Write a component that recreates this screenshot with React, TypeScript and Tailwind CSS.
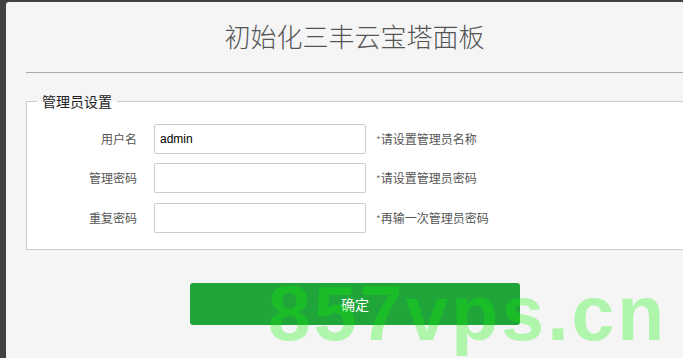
import React from "react";

const cjk = '"Noto Sans CJK SC", "Liberation Sans", sans-serif';

function Row({ label, value, hint, className = "" }: { label: string; value?: string; hint: string; className?: string }) {
  return (
    <div className={"flex items-center h-[30px] " + className}>
      <div className="w-[110px] text-right text-[12px] text-[#555] mr-[17px]" style={{ fontFamily: cjk }}>
        {label}
      </div>
      <div
        className="w-[212px] h-[30px] border border-[#ccc] rounded-[2px] bg-white px-[5px] flex items-center text-[12px] text-black"
        style={{ fontFamily: '"Liberation Sans", Arial, sans-serif' }}
      >
        {value}
      </div>
      <div className="ml-[10px] text-[12px] text-[#555]" style={{ fontFamily: cjk }}>
        <span className="text-[10px] text-[#777]">*</span>
        {hint}
      </div>
    </div>
  );
}

export default function App() {
  return (
    <div className="w-[683px] h-[358px] bg-[#424242] relative overflow-hidden">
      <div className="ml-[6px] mt-[2px] h-[356px] bg-[#f5f5f5] rounded-tl-[3px] overflow-hidden">
        <div className="ml-[20px] h-[71px] border-b border-[#aaa] flex items-center justify-center">
          <span className="text-[26px] font-light text-[#555] pb-[3px]" style={{ fontFamily: cjk }}>
            初始化三丰云宝塔面板
          </span>
        </div>
        <fieldset className="ml-[20px] mt-[18px] w-[700px] border border-[#ccc] bg-white pt-[13px] pb-[16px]">
          <legend
            className="ml-[10px] px-[5px] text-[14px] leading-[20px] text-[#222]"
            style={{ fontFamily: cjk }}
          >
            管理员设置
          </legend>
          <div className="flex flex-col">
            <Row label="用户名" value="admin" hint="请设置管理员名称" />
            <Row label="管理密码" hint="请设置管理员密码" className="mt-[9px]" />
            <Row label="重复密码" hint="再输一次管理员密码" className="mt-[10px]" />
          </div>
        </fieldset>
        <div className="ml-[184px] mt-[33px] w-[330px] h-[42px] bg-[#20a53a] rounded-[3px] flex items-center justify-center text-white text-[14px]" style={{ fontFamily: cjk }}>
          确定
        </div>
      </div>
      <div
        className="absolute left-[268px] top-[275px] text-[77px] leading-none font-bold tracking-[3px] text-[rgba(12,245,0,0.3)] pointer-events-none"
        style={{ fontFamily: '"Liberation Sans", Arial, sans-serif' }}
      >
        857vps.cn
      </div>
    </div>
  );
}
